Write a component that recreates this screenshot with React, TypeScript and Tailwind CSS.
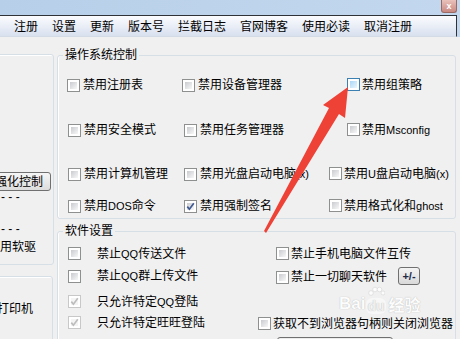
import React from "react";

type Kind = "off" | "hot" | "on" | "dis";

// ascii runs (Msconfig, QQ, DOS...) come out in a narrower latin face
function Txt({ t }: { t: string }) {
  const parts = t.split(/([A-Za-z()]+)/);
  return (
    <>
      {parts.map((p, i) =>
        /[A-Za-z]/.test(p) ? (
          <span key={i} className="font-['Liberation_Sans',sans-serif] text-[11px]">
            {p}
          </span>
        ) : (
          <React.Fragment key={i}>{p}</React.Fragment>
        )
      )}
    </>
  );
}

function Box({ kind = "off" }: { kind?: Kind }) {
  const outer =
    kind === "hot" ? "border-[#3c7fb1]" : kind === "dis" ? "border-[#c8c8c8]" : "border-[#8e8f8f]";
  const inner =
    kind === "hot"
      ? "bg-gradient-to-br from-[#a9d8f7] to-[#eaf6fd]"
      : kind === "dis"
      ? "bg-[#f4f4f4]"
      : "bg-gradient-to-br from-[#c9cbcf] to-[#f8f8f8]";
  return (
    <div className={`relative w-[13px] h-[13px] shrink-0 border ${outer} bg-white p-[2px]`}>
      <div className={`w-full h-full ${inner}`} />
      {(kind === "on" || kind === "dis") && (
        <svg className="absolute inset-0" width="11" height="11" viewBox="0 0 11 11">
          <path
            d="M2.3 5.6 L4.4 8.2 L8.8 2.2"
            fill="none"
            stroke={kind === "on" ? "#3f5a92" : "#bdbdbd"}
            strokeWidth="1.7"
          />
        </svg>
      )}
    </div>
  );
}

function Check({ t, kind, gap = "gap-[3px]" }: { t: string; kind?: Kind; gap?: string }) {
  return (
    <div className={`flex items-center ${gap} leading-[14px] whitespace-nowrap`}>
      <Box kind={kind} />
      <span>
        <Txt t={t} />
      </span>
    </div>
  );
}

const menu = ["注册", "设置", "更新", "版本号", "拦截日志", "官网博客", "使用必读", "取消注册"];

export default function App() {
  return (
    <div className="relative w-[460px] h-[339px] overflow-hidden bg-[#f0f0f0] text-[12px] text-black font-['Liberation_Sans','Noto_Sans_CJK_SC',sans-serif]">
      {/* title bar */}
      <div className="h-[15px] bg-gradient-to-r from-[#b7cfe9] to-[#c3d8ee] flex justify-end">
        <div className="w-[16px] h-[13px] mr-[3px] rounded-b-[3px] border border-t-0 border-[#9a6a64] bg-gradient-to-b from-[#e9c1bb] to-[#c98a82] flex items-center justify-center text-white text-[9px] font-bold leading-none">
          x
        </div>
      </div>

      {/* menu bar */}
      <div className="flex h-[22px]">
        <div className="flex-1 flex items-center gap-[14px] pl-[14px] border-t border-r border-[#2f3338] border-b-[#d3dbe7] border-b bg-gradient-to-b from-[#fbfcfe] to-[#d8e0ef] font-['Noto_Sans_CJK_SC',sans-serif]">
          {menu.map((m) => (
            <span key={m} className="leading-[14px]">
              {m}
            </span>
          ))}
        </div>
        <div className="w-[3px] bg-[#c3d8ee]" />
      </div>

      <div className="flex">
        {/* left panel, mostly off screen */}
        <div className="w-[54px] shrink-0 flex flex-col">
          <div className="-ml-[10px] w-[64px] mt-[17px] h-[211px] border border-[#d5dfe5] rounded-[3px] shadow-[inset_1px_1px_0_#fff] flex flex-col">
            <div className="mt-[117px] self-end mr-[2px] w-[60px] h-[19px] rounded-[3px] border border-[#707070] bg-gradient-to-b from-[#f6f6f6] to-[#dcdcdc] flex items-center justify-end pr-[7px] leading-[14px] whitespace-nowrap">
              强化控制
            </div>
            <div className="ml-[10px] leading-[12px]">- - -</div>
            <div className="ml-[10px] mt-[20px] leading-[12px]">- - -</div>
            <div className="-ml-[3px] mt-[5px] leading-[14px] whitespace-nowrap">禁用软驱</div>
          </div>
          <div className="-ml-[10px] w-[63px] mt-[11px] h-[80px] border border-[#d5dfe5] rounded-[3px] shadow-[inset_1px_1px_0_#fff]">
            <div className="mt-[25px] ml-[6px] leading-[14px] whitespace-nowrap">打印机</div>
          </div>
        </div>

        {/* main column */}
        <div className="ml-[3px] flex flex-col">
          <fieldset className="mt-[11px] w-[399px] h-[171px] border border-[#d5dfe5] rounded-[3px] shadow-[inset_1px_0_0_#fff]">
            <legend className="ml-[5px] px-[2px] leading-[14px]">操作系统控制</legend>
            <div className="flex h-[13px] mt-[16px]">
              <div className="ml-[9px] w-[115px]">
                <Check t="禁用注册表" />
              </div>
              <div className="w-[165px]">
                <Check t="禁用设备管理器" />
              </div>
              <Check t="禁用组策略" kind="hot" gap="gap-[2px]" />
            </div>
            <div className="flex h-[13px] mt-[32px]">
              <div className="ml-[10px] w-[116px]">
                <Check t="禁用安全模式" />
              </div>
              <div className="w-[163px]">
                <Check t="禁用任务管理器" />
              </div>
              <Check t="禁用Msconfig" gap="gap-[2px]" />
            </div>
            <div className="flex h-[13px] mt-[31px]">
              <div className="ml-[10px] w-[116px]">
                <Check t="禁用计算机管理" />
              </div>
              <div className="w-[145px]">
                <Check t="禁用光盘启动电脑(x)" />
              </div>
              <Check t="禁用U盘启动电脑(x)" gap="gap-[2px]" />
            </div>
            <div className="flex h-[13px] mt-[19px]">
              <div className="ml-[10px] w-[116px]">
                <Check t="禁用DOS命令" />
              </div>
              <div className="w-[145px]">
                <Check t="禁用强制签名" kind="on" />
              </div>
              <Check t="禁用格式化和ghost" gap="gap-[2px]" />
            </div>
          </fieldset>

          <fieldset className="mt-[5px] w-[399px] h-[140px] border border-[#d5dfe5] rounded-[3px] shadow-[inset_1px_0_0_#fff]">
            <legend className="ml-[5px] px-[2px] leading-[14px]">软件设置</legend>
            <div className="flex items-center h-[13px] mt-[9px]">
              <div className="ml-[10px] w-[208px]">
                <Check t="禁止QQ传送文件" gap="gap-[16px]" />
              </div>
              <Check t="禁止手机电脑文件互传" gap="gap-[2px]" />
            </div>
            <div className="flex items-center h-[18px] mt-[7px]">
              <div className="ml-[10px] w-[208px]">
                <Check t="禁止QQ群上传文件" gap="gap-[16px]" />
              </div>
              <div className="mt-[2px]">
                <Check t="禁止一切聊天软件" gap="gap-[2px]" />
              </div>
              <div className="ml-[11px] w-[22px] h-[18px] rounded-[3px] border border-[#707070] bg-gradient-to-b from-[#f4f4f4] to-[#d9d9d9] flex items-center justify-center text-[11px] text-[#1c2a4a] font-bold font-['Liberation_Sans',sans-serif] leading-none">
                +/-
              </div>
            </div>
            <div className="flex items-center h-[13px] mt-[10px]">
              <div className="ml-[10px]">
                <Check t="只允许特定QQ登陆" kind="dis" gap="gap-[16px]" />
              </div>
            </div>
            <div className="flex items-center h-[13px] mt-[8px]">
              <div className="ml-[10px] w-[190px]">
                <Check t="只允许特定旺旺登陆" kind="dis" gap="gap-[16px]" />
              </div>
              <div className="mt-[2px]">
                <Check t="获取不到浏览器句柄则关闭浏览器" gap="gap-[2px]" />
              </div>
            </div>
            <div className="ml-[219px] mt-[8px] w-[116px] h-[10px] rounded-t-[3px] border border-[#707070] bg-[#ececec]" />
          </fieldset>
        </div>
      </div>

      {/* red arrow drawn over the dialog */}
      <svg className="absolute left-0 top-0 pointer-events-none" width="460" height="339" viewBox="0 0 460 339">
        <polygon
          points="348,87 345,118 339,114 266,233 264,231 329,108 323,105"
          fill="#ee4237"
        />
      </svg>

      {/* baidu watermark */}
      <div className="absolute left-[339px] top-[286px] flex items-end gap-[1px] text-white opacity-80 [text-shadow:0_0_1px_rgba(0,0,0,0.35)] pointer-events-none">
        <span className="font-['Liberation_Sans',sans-serif] font-bold text-[17px] leading-[20px]">Bai</span>
        <div className="relative flex flex-col items-center">
          <svg width="18" height="12" viewBox="0 0 18 12">
            <circle cx="4" cy="7" r="2.3" fill="#fff" stroke="#c8c8c8" strokeWidth="0.5" />
            <circle cx="8" cy="3.5" r="2.3" fill="#fff" stroke="#c8c8c8" strokeWidth="0.5" />
            <circle cx="12.5" cy="3.5" r="2.3" fill="#fff" stroke="#c8c8c8" strokeWidth="0.5" />
            <circle cx="16" cy="7" r="2" fill="#fff" stroke="#c8c8c8" strokeWidth="0.5" />
          </svg>
          <span className="font-['Liberation_Sans',sans-serif] font-bold text-[14px] leading-[16px] bg-white/60 rounded-[6px] px-[1px] text-[#f0f0f0]">du</span>
        </div>
        <span className="ml-[2px] font-['Noto_Sans_CJK_SC',sans-serif] font-bold text-[16px] leading-[20px]">经验</span>
      </div>
    </div>
  );
}
